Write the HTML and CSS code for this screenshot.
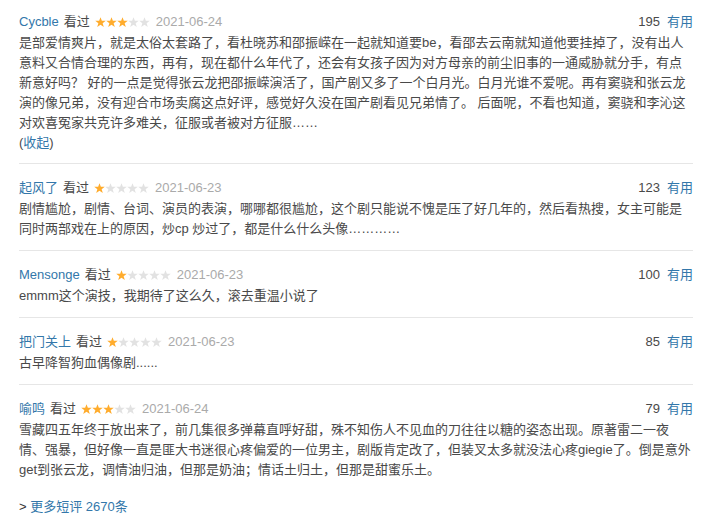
FILE: index.html
```html
<!DOCTYPE html>
<html lang="zh-CN">
<head>
<meta charset="utf-8">
<title>短评</title>
<link rel="stylesheet" href="styles.css">
</head>
<body>
<svg class="defs" width="0" height="0" aria-hidden="true">
  <symbol id="star" viewBox="0 0 11 11">
    <polygon points="5.5,0.2 6.85,3.75 10.75,3.8 7.65,6.2 8.8,10.05 5.5,7.8 2.2,10.05 3.35,6.2 0.25,3.8 4.15,3.75"/>
  </symbol>
</svg>
<div class="comments">
  <div class="comment-item">
    <div class="comment-head">
      <div class="info">
        <a class="user" href="#">Cycble</a>
        <span class="status">看过</span>
        <svg class="rating" width="55" height="11" viewBox="0 0 55 11"><use href="#star" x="0" width="11" height="11" class="on"/><use href="#star" x="11" width="11" height="11" class="on"/><use href="#star" x="22" width="11" height="11" class="on"/><use href="#star" x="33" width="11" height="11" class="off"/><use href="#star" x="44" width="11" height="11" class="off"/></svg>
        <span class="time">2021-06-24</span>
      </div>
      <div class="votes"><span class="count">195</span><a class="useful" href="#">有用</a></div>
    </div>
    <p class="short">是部爱情爽片，就是太俗太套路了，看杜晓苏和邵振嵘在一起就知道要be，看邵去云南就知道他要挂掉了，没有出人意料又合情合理的东西，再有，现在都什么年代了，还会有女孩子因为对方母亲的前尘旧事的一通威胁就分手，有点新意好吗？ 好的一点是觉得张云龙把邵振嵘演活了，国产剧又多了一个白月光。白月光谁不爱呢。再有窦骁和张云龙演的像兄弟，没有迎合市场卖腐这点好评，感觉好久没在国产剧看见兄弟情了。 后面呢，不看也知道，窦骁和李沁这对欢喜冤家共克许多难关，征服或者被对方征服……</p>
    <p class="fold">(<a href="#">收起</a>)</p>
  </div>

  <div class="comment-item">
    <div class="comment-head">
      <div class="info">
        <a class="user" href="#">起风了</a>
        <span class="status">看过</span>
        <svg class="rating" width="55" height="11" viewBox="0 0 55 11"><use href="#star" x="0" width="11" height="11" class="on"/><use href="#star" x="11" width="11" height="11" class="off"/><use href="#star" x="22" width="11" height="11" class="off"/><use href="#star" x="33" width="11" height="11" class="off"/><use href="#star" x="44" width="11" height="11" class="off"/></svg>
        <span class="time">2021-06-23</span>
      </div>
      <div class="votes"><span class="count">123</span><a class="useful" href="#">有用</a></div>
    </div>
    <p class="short">剧情尴尬，剧情、台词、演员的表演，哪哪都很尴尬，这个剧只能说不愧是压了好几年的，然后看热搜，女主可能是同时两部戏在上的原因，炒cp 炒过了，都是什么什么头像…………</p>
  </div>

  <div class="comment-item">
    <div class="comment-head">
      <div class="info">
        <a class="user" href="#">Mensonge</a>
        <span class="status">看过</span>
        <svg class="rating" width="55" height="11" viewBox="0 0 55 11"><use href="#star" x="0" width="11" height="11" class="on"/><use href="#star" x="11" width="11" height="11" class="off"/><use href="#star" x="22" width="11" height="11" class="off"/><use href="#star" x="33" width="11" height="11" class="off"/><use href="#star" x="44" width="11" height="11" class="off"/></svg>
        <span class="time">2021-06-23</span>
      </div>
      <div class="votes"><span class="count">100</span><a class="useful" href="#">有用</a></div>
    </div>
    <p class="short">emmm这个演技，我期待了这么久，滚去重温小说了</p>
  </div>

  <div class="comment-item">
    <div class="comment-head">
      <div class="info">
        <a class="user" href="#">把门关上</a>
        <span class="status">看过</span>
        <svg class="rating" width="55" height="11" viewBox="0 0 55 11"><use href="#star" x="0" width="11" height="11" class="on"/><use href="#star" x="11" width="11" height="11" class="off"/><use href="#star" x="22" width="11" height="11" class="off"/><use href="#star" x="33" width="11" height="11" class="off"/><use href="#star" x="44" width="11" height="11" class="off"/></svg>
        <span class="time">2021-06-23</span>
      </div>
      <div class="votes"><span class="count">85</span><a class="useful" href="#">有用</a></div>
    </div>
    <p class="short">古早降智狗血偶像剧......</p>
  </div>

  <div class="comment-item">
    <div class="comment-head">
      <div class="info">
        <a class="user" href="#">喻鸣</a>
        <span class="status">看过</span>
        <svg class="rating" width="55" height="11" viewBox="0 0 55 11"><use href="#star" x="0" width="11" height="11" class="on"/><use href="#star" x="11" width="11" height="11" class="on"/><use href="#star" x="22" width="11" height="11" class="on"/><use href="#star" x="33" width="11" height="11" class="off"/><use href="#star" x="44" width="11" height="11" class="off"/></svg>
        <span class="time">2021-06-24</span>
      </div>
      <div class="votes"><span class="count">79</span><a class="useful" href="#">有用</a></div>
    </div>
    <p class="short">雪藏四五年终于放出来了，前几集很多弹幕直呼好甜，殊不知伤人不见血的刀往往以糖的姿态出现。原著雷二一夜情、强暴，但好像一直是匪大书迷很心疼偏爱的一位男主，剧版肯定改了，但装叉太多就没法心疼giegie了。倒是意外get到张云龙，调情油归油，但那是奶油；情话土归土，但那是甜蜜乐土。</p>
  </div>

  <p class="more">&gt; <a href="#">更多短评 2670条</a></p>
</div>
</body>
</html>
```

FILE: styles.css
```css
html, body {
  margin: 0;
  padding: 0;
  background: #fff;
}

body {
  font-family: "Liberation Sans", Arial, "Noto Sans CJK SC", sans-serif;
  font-size: 13px;
  color: #494949;
}

.defs {
  position: absolute;
  width: 0;
  height: 0;
  overflow: hidden;
}

a {
  color: #37a;
  text-decoration: none;
}

.comments {
  width: 674px;
  padding: 0 0 0 19px;
}

.comment-item {
  padding: 14px 0 11px;
  border-top: 1px solid #e6e6e6;
}

.comment-item:first-child {
  border-top: none;
  padding-top: 12px;
  padding-bottom: 10px;
}

.comment-head {
  display: flex;
  justify-content: space-between;
  align-items: center;
  height: 20px;
  line-height: 20px;
  margin-bottom: 1px;
}

.info {
  display: flex;
  align-items: center;
  gap: 5px;
}

.status {
  color: #494949;
}

.rating {
  display: block;
}

.rating .on {
  fill: #ffac2d;
}

.rating .off {
  fill: #e2e2e2;
}

.time {
  color: #aaa;
  margin-left: 1px;
}

.votes {
  display: flex;
  align-items: center;
  gap: 7px;
}

.count {
  color: #494949;
}

.short {
  margin: 0;
  line-height: 20px;
}

.fold {
  margin: 0;
  line-height: 20px;
}

.more {
  margin: 6px 0 0;
  line-height: 20px;
  color: #333;
}
```
